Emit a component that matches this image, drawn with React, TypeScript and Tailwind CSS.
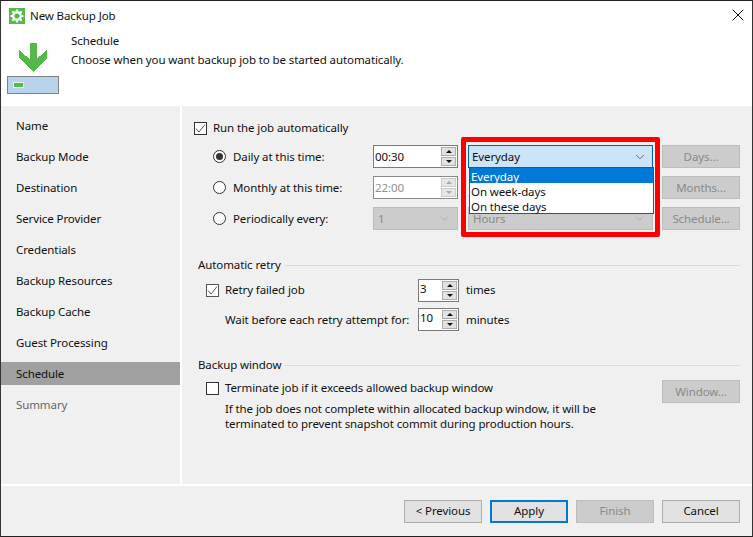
import { ChevronDown, X } from 'lucide-react';
import type { ReactNode } from 'react';

const steps = ['Name', 'Backup Mode', 'Destination', 'Service Provider', 'Credentials', 'Backup Resources', 'Backup Cache', 'Guest Processing', 'Schedule', 'Summary'];

function Check({ checked = false, dim = false }: { checked?: boolean; dim?: boolean }) {
  return (
    <span className={`flex h-[13px] w-[13px] shrink-0 items-center justify-center border ${dim ? 'border-[#555]' : 'border-[#333]'} bg-[#fff]`}>
      {checked && (
        <svg width="11" height="11" viewBox="0 0 11 11" fill="none" stroke="#555" strokeWidth="1">
          <path d="M1 5.5 L4 9 L10 1.5" />
        </svg>
      )}
    </span>
  );
}

function Radio({ checked = false }: { checked?: boolean }) {
  return (
    <span className="flex h-[13px] w-[13px] shrink-0 items-center justify-center rounded-full border border-[#333] bg-white">
      {checked && <span className="h-[7px] w-[7px] rounded-full bg-[#333]" />}
    </span>
  );
}

function Spinner({ value, w, disabled = false, raised = false }: { value: string; w: number; disabled?: boolean; raised?: boolean }) {
  const btn = disabled ? 'bg-[#e6e6e6] border-[#ccc]' : 'bg-[#e1e1e1] border-[#adadad]';
  return (
    <div style={{ width: w }} className={`flex h-[23px] items-center justify-between border pl-[1px] pr-[1px] ${disabled ? 'border-[#8a8a8a] text-[#8f8f8f]' : 'border-[#7a7a7a] text-[#111]'} bg-white`}>
      <span className={raised ? 'pb-[3px]' : ''}>{value}</span>
      <span className="flex flex-col gap-[1px]">
        <span className={`flex h-[9px] w-[15px] items-center justify-center border ${btn}`}>
          <span className={`h-0 w-0 border-x-[3px] border-b-[3px] border-x-transparent ${disabled ? 'border-b-[#aaa]' : 'border-b-[#111]'}`} />
        </span>
        <span className={`flex h-[9px] w-[15px] items-center justify-center border ${btn}`}>
          <span className={`h-0 w-0 border-x-[3px] border-t-[3px] border-x-transparent ${disabled ? 'border-t-[#aaa]' : 'border-t-[#111]'}`} />
        </span>
      </span>
    </div>
  );
}

function DisabledCombo({ value, className }: { value: string; className: string }) {
  return (
    <div className={`flex h-[23px] items-center justify-between border border-[#bcbcbc] bg-[#cccccc] pl-[4px] pr-[6px] text-[#8a8a8a] ${className}`}>
      <span>{value}</span>
      <ChevronDown size={13} strokeWidth={1.2} color="#a0a0a0" />
    </div>
  );
}

function SideButton({ label }: { label: string }) {
  return (
    <div className="flex h-[23px] w-[78px] shrink-0 items-center justify-center border border-[#bcbcbc] bg-[#cccccc] text-[#8a8a8a]">{label}</div>
  );
}

function FootButton({ children, className = '' }: { children: ReactNode; className?: string }) {
  return <div className={`flex h-[23px] w-[78px] items-center justify-center pb-[1px] ${className}`}>{children}</div>;
}

function Section({ title }: { title: string }) {
  return (
    <div className="flex items-center gap-[4px] pl-[4px]">
      <span>{title}</span>
      <span className="h-px flex-1 bg-[#dcdcdc]" />
    </div>
  );
}

export default function App() {
  return (
    <div className="flex h-[537px] w-[753px] flex-col overflow-hidden border-x border-b border-t border-x-[#333] border-b-[#222] border-t-[#222] bg-white font-['Noto_Sans',sans-serif] text-[11.5px] leading-[16px] tracking-[-0.1px] text-[#111]">
      <div className="flex h-[29px] shrink-0 items-center pl-[8px] pr-[4px] pt-[1px]">
        <svg width="16" height="16" viewBox="0 0 16 16" className="-mt-[1px] shrink-0">
          <rect width="16" height="16" fill="#54b948" />
          <circle cx="8" cy="8" r="3.800" fill="none" stroke="#fff" strokeWidth="2.400" />
          <path d="M8 1.500v2.500M8 12v2.500M1.500 8H4M12 8h2.500M3.400 3.400l1.800 1.800M10.800 10.800l1.800 1.800M3.400 12.600l1.800-1.800M10.800 5.200l1.800-1.800" stroke="#fff" strokeWidth="2.200" />
        </svg>
        <span className="ml-[5px]">New Backup Job</span>
        <X size={20} strokeWidth={1.2} className="-mt-[2px] ml-auto" />
      </div>

      <div className="flex h-[76px] shrink-0">
        <div className="flex w-[70px] shrink-0 flex-col items-start pl-[6px] pt-[13px]">
          <svg width="28" height="29" viewBox="0 0 28 29" className="ml-[12px]" shapeRendering="crispEdges">
            <path d="M10.500 0h7v16L28 7v8L14 29 0 15V7l10.500 9z" fill="#54b948" />
          </svg>
          <div className="mt-[4px] flex h-[18px] w-[52px] items-center border border-[#808080] bg-[#b9d3ec] pl-[5px]">
            <span className="flex h-[6px] w-[11px] items-center justify-center bg-[#e6f2e4]">
              <span className="h-[4px] w-[9px] bg-[#54b948]" />
            </span>
          </div>
        </div>
        <div className="flex flex-col gap-[3px] pt-[3px]">
          <div>Schedule</div>
          <div>Choose when you want backup job to be started automatically.</div>
        </div>
      </div>

      <div className="flex min-h-0 flex-1 bg-[#f0f0f0]">
        <div className="flex w-[179px] shrink-0 flex-col gap-[8px] pt-[8px]">
          {steps.map((s) => (
            <div key={s} className={`flex h-[23px] items-center pl-[15px] ${s === 'Schedule' ? 'bg-[#a0a0a0]' : ''} ${s === 'Summary' ? 'text-[#666]' : ''}`}>
              {s}
            </div>
          ))}
        </div>

        <div className="flex min-w-0 flex-1 flex-col border-l-2 border-white">
          <div className="flex min-h-0 flex-1 flex-col pl-[12px] pr-[12px] pt-[14px]">
            <div className="flex items-center gap-[6px]">
              <Check checked />
              <span>Run the job automatically</span>
            </div>

            <div className="relative mt-[9px] flex flex-col gap-[8px] pl-[19px]">
              <div className="flex h-[23px] items-center">
                <Radio checked />
                <span className="ml-[7px] w-[140px]">Daily at this time:</span>
                <Spinner value="00:30" w={85} />
                <div className="ml-[10px] flex h-[23px] w-[185px] items-center justify-between border border-[#0a5ea8] bg-[#cce4f7] pl-[3px] pr-[5px]">
                  <span>Everyday</span>
                  <ChevronDown size={14} strokeWidth={1.2} color="#333" />
                </div>
                <div className="ml-[9px]"><SideButton label="Days..." /></div>
              </div>
              <div className="flex h-[23px] items-center">
                <Radio />
                <span className="ml-[7px] w-[140px]">Monthly at this time:</span>
                <Spinner value="22:00" w={85} disabled />
                <div className="ml-[204px]"><SideButton label="Months..." /></div>
              </div>
              <div className="flex h-[23px] items-center">
                <Radio />
                <span className="ml-[7px] w-[140px]">Periodically every:</span>
                <DisabledCombo value="1" className="w-[85px]" />
                <DisabledCombo value="Hours" className="ml-[10px] w-[185px]" />
                <div className="ml-[9px]"><SideButton label="Schedule..." /></div>
              </div>

              <div className="absolute left-[267px] top-[-8px] h-[100px] w-[199px] rounded-[2px] border-[5px] border-[#ff0000]" />
              <div className="absolute left-[275px] top-[22px] w-[185px] border border-[#0a5ea8] bg-white">
                <div className="h-[15px] bg-[#0078d7] pl-[1px] leading-[17px] text-white">Everyday</div>
                <div className="h-[15px] pl-[1px] leading-[17px]">On week-days</div>
                <div className="h-[15px] pl-[1px] leading-[17px]">On these days</div>
              </div>
            </div>

            <div className="mt-[27px]">
              <Section title="Automatic retry" />
            </div>
            <div className="mt-[6px] flex h-[23px] items-center pl-[12px]">
              <Check checked dim />
              <span className="ml-[6px] w-[193px] pb-[2px]">Retry failed job</span>
              <Spinner value="3" w={41} raised />
              <span className="ml-[7px] pb-[1px]">times</span>
            </div>
            <div className="mt-[6px] flex h-[23px] items-center pl-[31px]">
              <span className="w-[193px] whitespace-nowrap">Wait before each retry attempt for:</span>
              <Spinner value="10" w={41} raised />
              <span className="ml-[7px]">minutes</span>
            </div>

            <div className="mt-[26px]">
              <Section title="Backup window" />
            </div>
            <div className="mt-[7px] flex items-start justify-between pl-[12px]">
              <div className="flex flex-col">
                <div className="flex items-center gap-[6px]">
                  <Check />
                  <span>Terminate job if it exceeds allowed backup window</span>
                </div>
                <div className="mt-[5px] pl-[19px] leading-[15px]">
                  If the job does not complete within allocated backup window, it will be
                  <br />
                  terminated to prevent snapshot commit during production hours.
                </div>
              </div>
              <SideButton label="Window..." />
            </div>
          </div>
        </div>
      </div>

      <div className="flex h-[52px] shrink-0 items-start justify-end gap-[8px] border-t-2 border-white bg-[#f0f0f0] pr-[12px] pt-[14px]">
        <FootButton className="border border-[#adadad] bg-[#e1e1e1]">&lt; Previous</FootButton>
        <FootButton className="border-2 border-[#0078d7] bg-[#e1e1e1]">Apply</FootButton>
        <FootButton className="border border-[#bcbcbc] bg-[#cccccc] text-[#8a8a8a]">Finish</FootButton>
        <FootButton className="border border-[#adadad] bg-[#e1e1e1]">Cancel</FootButton>
      </div>
    </div>
  );
}
